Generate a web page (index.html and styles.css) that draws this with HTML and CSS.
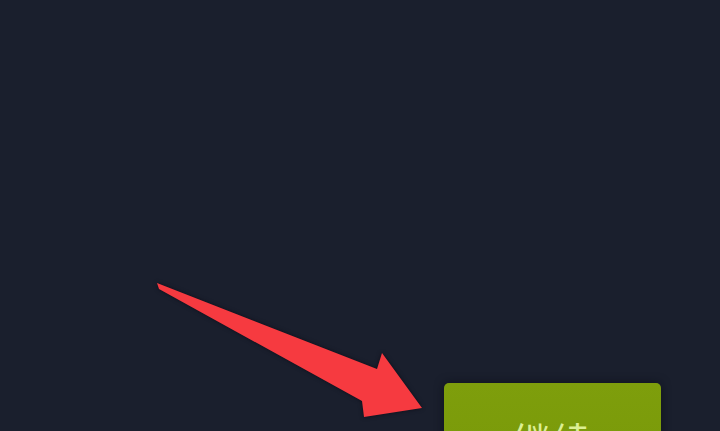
FILE: index.html
```html
<!DOCTYPE html>
<html>
<head>
  <title>继续</title>
  <link rel="stylesheet" href="styles.css">
</head>
<body>
  <div class="screen">
    <div class="actions">
      <button class="continue-button">继续</button>
    </div>

    <!-- pointer drawn over the screen towards the button -->
    <svg class="pointer" width="720" height="431" viewBox="0 0 720 431">
      <polygon points="157,283 377,369 382,353 422,408 364,417 362,401 159,289" fill="#f63a40"/>
    </svg>
  </div>
</body>
</html>
```

FILE: styles.css
```css
body {
  margin: 0;
  background: #1a1f2d;
  font-family: "Noto Sans CJK SC", "Noto Sans", sans-serif;
}

.screen {
  position: relative;
  height: 431px;
  overflow: hidden;
  background: #1a1f2d;
}

.actions {
  display: flex;
  justify-content: flex-end;
  padding: 383px 59px 0 0;
}

.continue-button {
  width: 217px;
  height: 110px;
  border: none;
  border-radius: 5px;
  background: linear-gradient(#7e9e0c, #789808);
  color: #dcef94;
  font-family: inherit;
  font-size: 38px;
  letter-spacing: 2px;
  box-shadow: 0 0 10px rgba(8, 12, 20, 0.6);
  padding: 0;
}

.pointer {
  position: absolute;
  left: 0;
  top: 0;
  filter: drop-shadow(0 0 2px rgba(10, 10, 20, 0.8));
}
```
